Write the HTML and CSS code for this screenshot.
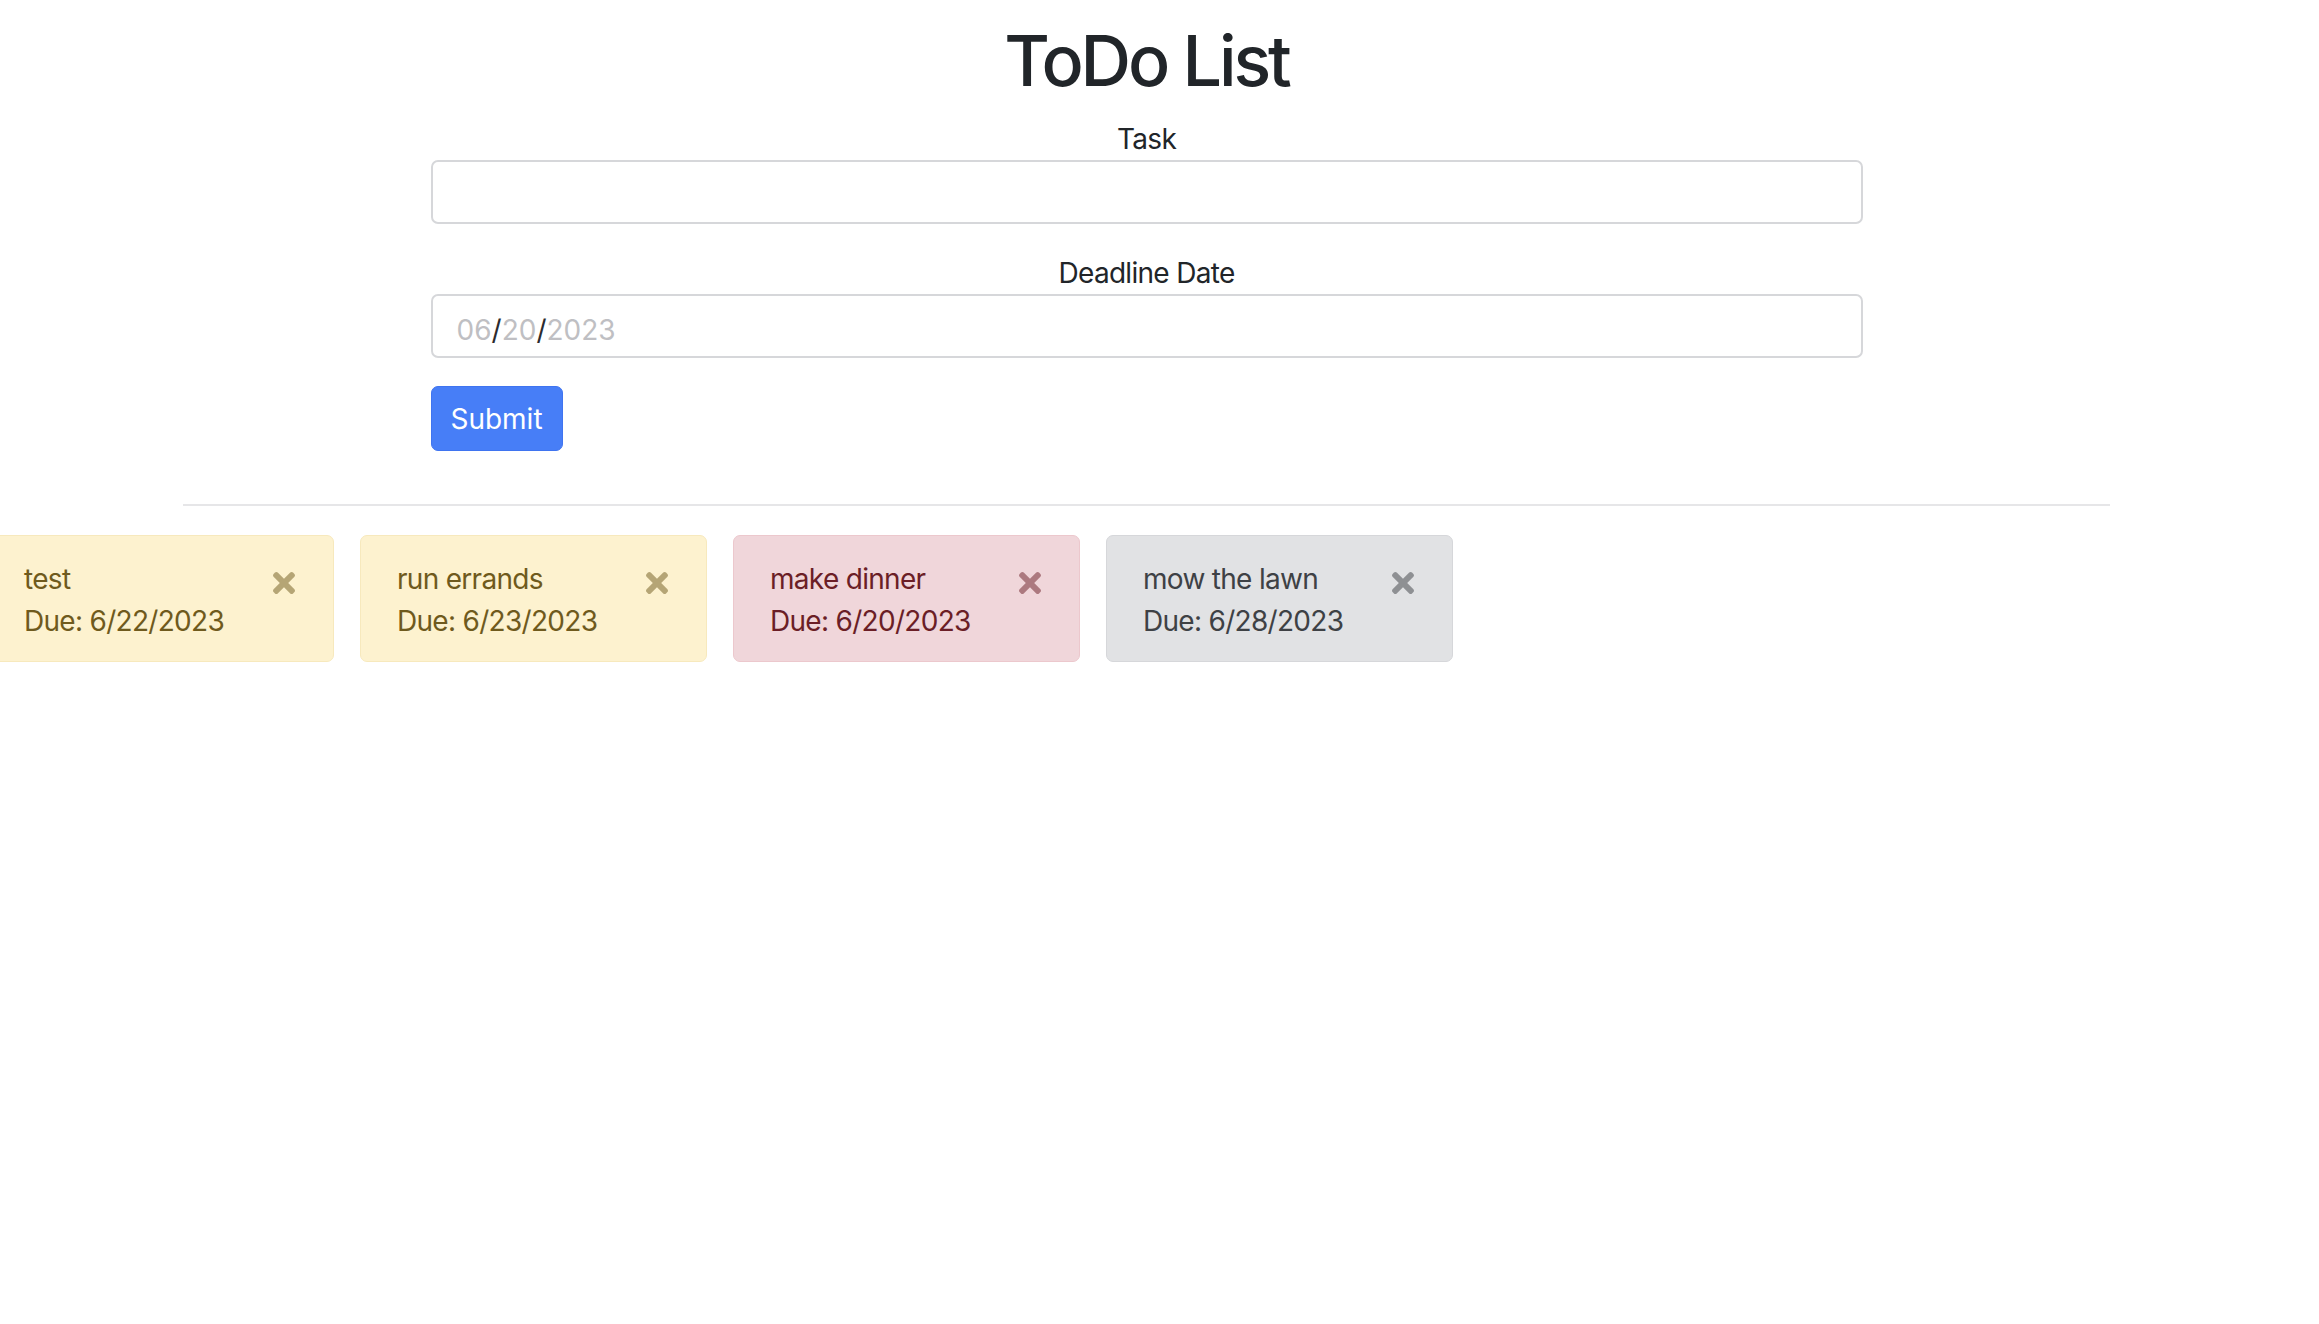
FILE: index.html
```html
<!DOCTYPE html>
<html lang="en">
<head>
<meta charset="utf-8">
<title>ToDo List</title>
<link rel="stylesheet" href="styles.css">
</head>
<body>
<div class="page">
  <h1 class="title">ToDo List</h1>
  <form class="task-form">
    <div class="field">
      <label class="field-label" for="task">Task</label>
      <input class="field-input" id="task" type="text">
    </div>
    <div class="field">
      <label class="field-label">Deadline Date</label>
      <div class="field-input date-input"><span class="seg">06</span><span class="sep">/</span><span class="seg">20</span><span class="sep">/</span><span class="seg">2023</span></div>
    </div>
    <button class="submit-btn" type="button">Submit</button>
  </form>
  <hr class="divider">
  <div class="card-row">
    <div class="todo-card warning">
      <div class="todo-text">
        <div>test</div>
        <div>Due: 6/22/2023</div>
      </div>
      <span class="close-x"><svg viewBox="0 80 352 352"><path d="M242.72 256l100.07-100.07c12.28-12.28 12.28-32.19 0-44.48l-22.24-22.24c-12.28-12.28-32.19-12.28-44.48 0L176 189.28 75.93 89.21c-12.28-12.28-32.19-12.28-44.48 0L9.21 111.45c-12.28 12.28-12.28 32.19 0 44.48L109.28 256 9.21 356.07c-12.28 12.28-12.28 32.19 0 44.48l22.24 22.24c12.28 12.28 32.2 12.28 44.48 0L176 322.72l100.07 100.07c12.28 12.28 32.2 12.28 44.48 0l22.24-22.24c12.28-12.28 12.28-32.19 0-44.48L242.72 256z"/></svg></span>
    </div>
    <div class="todo-card warning">
      <div class="todo-text">
        <div>run errands</div>
        <div>Due: 6/23/2023</div>
      </div>
      <span class="close-x"><svg viewBox="0 80 352 352"><path d="M242.72 256l100.07-100.07c12.28-12.28 12.28-32.19 0-44.48l-22.24-22.24c-12.28-12.28-32.19-12.28-44.48 0L176 189.28 75.93 89.21c-12.28-12.28-32.19-12.28-44.48 0L9.21 111.45c-12.28 12.28-12.28 32.19 0 44.48L109.28 256 9.21 356.07c-12.28 12.28-12.28 32.19 0 44.48l22.24 22.24c12.28 12.28 32.2 12.28 44.48 0L176 322.72l100.07 100.07c12.28 12.28 32.2 12.28 44.48 0l22.24-22.24c12.28-12.28 12.28-32.19 0-44.48L242.72 256z"/></svg></span>
    </div>
    <div class="todo-card danger">
      <div class="todo-text">
        <div>make dinner</div>
        <div>Due: 6/20/2023</div>
      </div>
      <span class="close-x"><svg viewBox="0 80 352 352"><path d="M242.72 256l100.07-100.07c12.28-12.28 12.28-32.19 0-44.48l-22.24-22.24c-12.28-12.28-32.19-12.28-44.48 0L176 189.28 75.93 89.21c-12.28-12.28-32.19-12.28-44.48 0L9.21 111.45c-12.28 12.28-12.28 32.19 0 44.48L109.28 256 9.21 356.07c-12.28 12.28-12.28 32.19 0 44.48l22.24 22.24c12.28 12.28 32.2 12.28 44.48 0L176 322.72l100.07 100.07c12.28 12.28 32.2 12.28 44.48 0l22.24-22.24c12.28-12.28 12.28-32.19 0-44.48L242.72 256z"/></svg></span>
    </div>
    <div class="todo-card secondary">
      <div class="todo-text">
        <div>mow the lawn</div>
        <div>Due: 6/28/2023</div>
      </div>
      <span class="close-x"><svg viewBox="0 80 352 352"><path d="M242.72 256l100.07-100.07c12.28-12.28 12.28-32.19 0-44.48l-22.24-22.24c-12.28-12.28-32.19-12.28-44.48 0L176 189.28 75.93 89.21c-12.28-12.28-32.19-12.28-44.48 0L9.21 111.45c-12.28 12.28-12.28 32.19 0 44.48L109.28 256 9.21 356.07c-12.28 12.28-12.28 32.19 0 44.48l22.24 22.24c12.28 12.28 32.2 12.28 44.48 0L176 322.72l100.07 100.07c12.28 12.28 32.2 12.28 44.48 0l22.24-22.24c12.28-12.28 12.28-32.19 0-44.48L242.72 256z"/></svg></span>
    </div>
  </div>
</div>
</body>
</html>
```

FILE: styles.css
```css
* { box-sizing: border-box; }
html, body { margin: 0; padding: 0; background: #fff; }
body {
  font-family: Inter, "Liberation Sans", Arial, sans-serif;
  font-size: 28px;
  line-height: 42px;
  letter-spacing: -0.025em;
  color: #212529;
  overflow: hidden;
}
.page {
  width: 2293px;
}
.title {
  margin: 19px 0 15px;
  font-size: 70px;
  font-weight: 500;
  line-height: 84px;
  letter-spacing: -0.045em;
  text-align: center;
  color: #212529;
}
.task-form {
  width: 1432px;
  margin: 0 auto;
}
.field {
  margin-bottom: 28px;
}
.field-label {
  display: block;
  text-align: center;
  line-height: 42px;
}
.field-input {
  display: block;
  width: 100%;
  height: 64px;
  border: 2px solid #d6d7da;
  border-radius: 7px;
  background: #fff;
  font: inherit;
  padding: 0 24px;
  outline: none;
}
.date-input {
  display: flex;
  align-items: center;
  padding-top: 8px;
  color: #bfbfc3;
  letter-spacing: 0;
}
.date-input .sep { color: #2b2b2e; }
.submit-btn {
  display: block;
  height: 65px;
  width: 132px;
  padding: 0;
  border: 1px solid #3f74f0;
  border-radius: 7px;
  background: #477ef7;
  color: #fff;
  font: inherit;
  font-size: 28px;
}
.divider {
  width: 1927px;
  margin: 53px auto 29px;
  border: 0;
  border-top: 2px solid #e6e6e8;
}
.card-row {
  display: flex;
  gap: 26px;
  margin-left: -13px;
}
.todo-card {
  width: 347px;
  height: 127px;
  flex: none;
  display: flex;
  justify-content: space-between;
  align-items: flex-start;
  padding: 22px 38px 19px 36px;
  border: 1px solid;
  border-radius: 7px;
}
.todo-text { line-height: 42px; }
.warning { background: #fdf2cf; border-color: #f7e9bd; color: #6f5a1d; }
.danger { background: #f0d6da; border-color: #ecc8cd; color: #6b1e26; }
.secondary { background: #e1e2e4; border-color: #d6d7da; color: #3e4145; }
.close-x {
  display: block;
  width: 22px;
  height: 22px;
  margin-top: 14px;
  opacity: 0.5;
}
.close-x svg { display: block; width: 22px; height: 22px; fill: currentColor; }
```
